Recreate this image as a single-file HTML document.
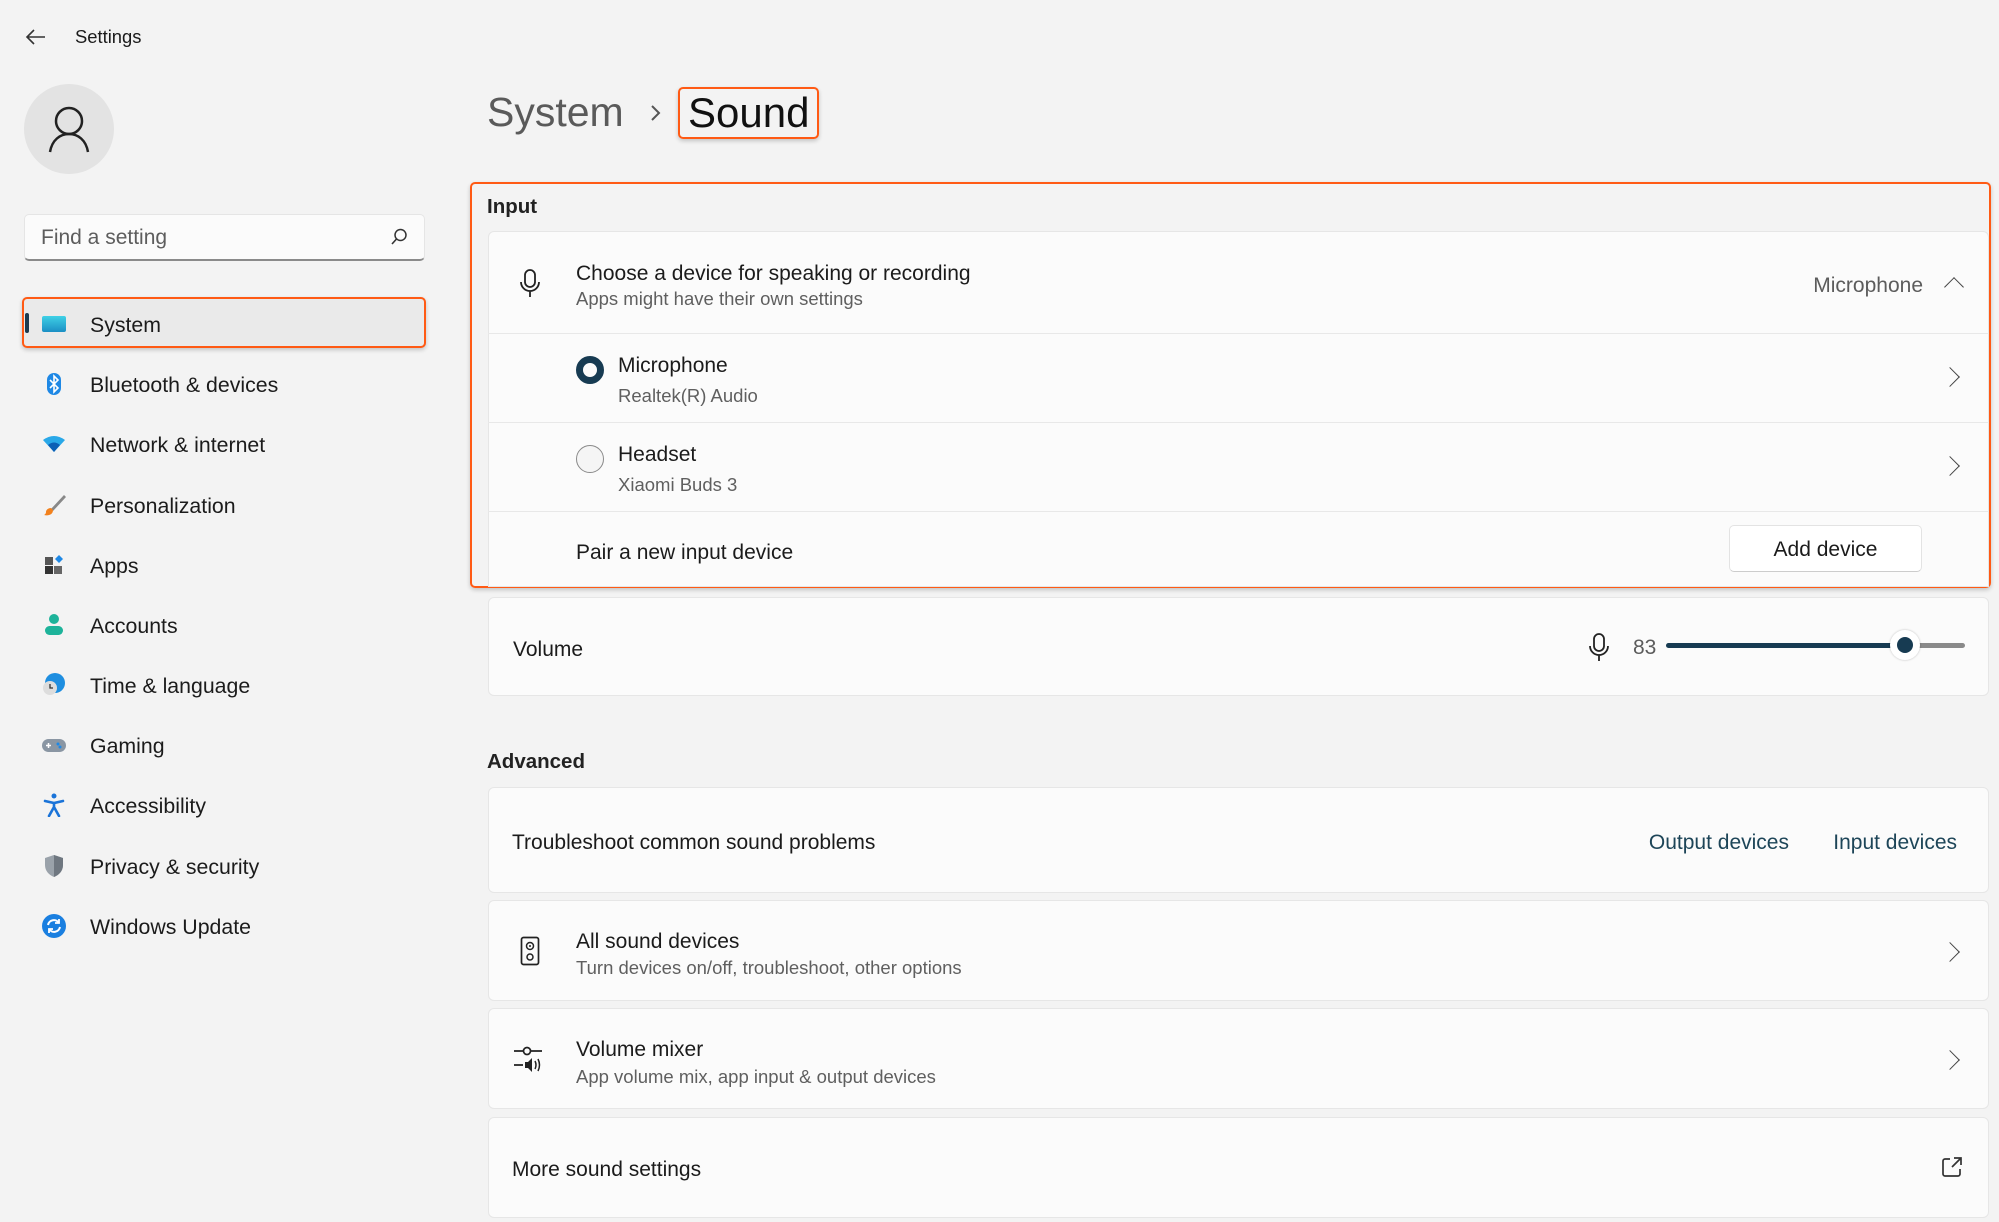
<!DOCTYPE html>
<html><head><meta charset="utf-8"><style>
*{box-sizing:border-box;margin:0;padding:0}
body{width:1999px;height:1222px;background:#f3f3f3;font-family:"Liberation Sans",sans-serif;color:#1b1b1b;position:relative;overflow:hidden}
.a{position:absolute;white-space:nowrap}
.t{font-size:21px}
.s{font-size:18.5px;color:#5f5f5f}
.card{position:absolute;left:488px;width:1501px;background:#fbfbfb;border:1px solid #e6e6e6;border-radius:6px}
.nav{position:absolute;left:90px;font-size:21.3px;color:#1b1b1b;margin-top:1px}
.ic{position:absolute;left:42px;width:24px;height:24px}
.hr{position:absolute;left:488px;width:1501px;height:1px;background:#e8e8e8}
.chev{position:absolute;width:14px;height:14px;border-right:1.6px solid #444;border-top:1.6px solid #444;transform:rotate(45deg)}
.r{position:absolute;white-space:nowrap;text-align:right}
</style></head><body>

<svg class="a" style="left:24px;top:28px" width="24" height="18" viewBox="0 0 24 18"><path d="M10 2 3 9l7 7M3 9h18" stroke="#333" stroke-width="1.6" fill="none"/></svg>
<div class="a" style="left:75px;top:26px;font-size:18.4px">Settings</div>

<div class="a" style="left:24px;top:84px;width:90px;height:90px;border-radius:50%;background:#e3e3e3"></div>
<svg class="a" style="left:47px;top:105px" width="44" height="48" viewBox="0 0 44 48"><circle cx="22" cy="16" r="13" stroke="#222" stroke-width="2.5" fill="none"/><path d="M3 47c2-12 10-18 19-18s17 6 19 18" stroke="#222" stroke-width="2.5" fill="none"/></svg>

<div class="a" style="left:24px;top:214px;width:401px;height:47px;background:#fbfbfb;border:1px solid #e5e5e5;border-bottom:2px solid #8a8a8a;border-radius:5px"></div>
<div class="a" style="left:41px;top:226px;font-size:21px;color:#5d5d5d">Find a setting</div>
<svg class="a" style="left:389px;top:227px" width="20" height="20" viewBox="0 0 20 20"><circle cx="11.5" cy="8" r="5.5" stroke="#333" stroke-width="1.5" fill="none"/><path d="M7.5 12 3 17" stroke="#333" stroke-width="1.6"/></svg>

<div class="a" style="left:22px;top:297px;width:404px;height:51px;background:#eaeaea;border:2.5px solid #ff5a14;border-radius:5px;box-shadow:0 2px 4px rgba(0,0,0,.2)"></div>
<div class="a" style="left:25px;top:313px;width:4px;height:20px;background:#1c3a4e;border-radius:2px"></div>
<div class="a" style="left:42px;top:316px;width:24px;height:16px;background:linear-gradient(#3fd1e6,#1b8fc4);border-radius:2px"></div>
<div class="nav" style="top:312px">System</div>

<svg class="ic" style="top:372px" viewBox="0 0 24 24"><rect x="5" y="1" width="14" height="22" rx="7" fill="#1e88e5"/><path d="M8 8l8 8-4 4V4l4 4-8 8" stroke="#fff" stroke-width="1.6" fill="none"/></svg>
<div class="nav" style="top:372px">Bluetooth &amp; devices</div>

<svg class="ic" style="top:432px" viewBox="0 0 24 24"><path d="M1 8q11-8 22 0L12 20z" fill="#29a8e8"/><path d="M6 13q6-5 12 0l-6 7z" fill="#0c5fb5"/></svg>
<div class="nav" style="top:432px">Network &amp; internet</div>

<svg class="ic" style="top:493px" viewBox="0 0 24 24"><path d="M22 2 9 16l2 2L24 4z" fill="#888"/><path d="M9 15c-3 0-5 2-5 4s-2 3-2 3c4 1 9 0 9-5z" fill="#f2811d"/></svg>
<div class="nav" style="top:493px">Personalization</div>

<svg class="ic" style="top:553px" viewBox="0 0 24 24"><rect x="3" y="4" width="8" height="8" fill="#555"/><rect x="3" y="13" width="8" height="8" fill="#333"/><rect x="12" y="13" width="8" height="8" fill="#666"/><path d="M17 2l4 4-4 4-4-4z" fill="#1e88e5"/></svg>
<div class="nav" style="top:553px">Apps</div>

<svg class="ic" style="top:613px" viewBox="0 0 24 24"><circle cx="12" cy="6" r="5" fill="#1db39a"/><rect x="3" y="13" width="18" height="9" rx="4.5" fill="#1db39a"/></svg>
<div class="nav" style="top:613px">Accounts</div>

<svg class="ic" style="top:673px" viewBox="0 0 24 24"><circle cx="13" cy="10" r="10" fill="#1e8ee0"/><circle cx="8" cy="15" r="7" fill="#ddd"/><path d="M8 11v4h3" stroke="#333" stroke-width="1.3" fill="none"/></svg>
<div class="nav" style="top:673px">Time &amp; language</div>

<svg class="ic" style="top:733px" viewBox="0 0 24 24"><rect x="0" y="6" width="24" height="13" rx="6.5" fill="#8a96a3"/><path d="M4 12.5h5M6.5 10v5" stroke="#fff" stroke-width="1.5"/><circle cx="16" cy="11" r="1.5" fill="#1e88e5"/><circle cx="18" cy="14" r="1.5" fill="#1e88e5"/></svg>
<div class="nav" style="top:733px">Gaming</div>

<svg class="ic" style="top:793px" viewBox="0 0 24 24"><circle cx="12" cy="3" r="2.5" fill="#1a73d8"/><path d="M3 8l9 2 9-2M12 10v4l-5 9M12 14l5 9" stroke="#1a73d8" stroke-width="2.6" fill="none" stroke-linecap="round"/></svg>
<div class="nav" style="top:793px">Accessibility</div>

<svg class="ic" style="top:854px" viewBox="0 0 24 24"><path d="M12 1 3 4v7c0 6 4 10 9 12 5-2 9-6 9-12V4z" fill="#9aa2aa"/><path d="M12 1v22c5-2 9-6 9-12V4z" fill="#6f7780"/></svg>
<div class="nav" style="top:854px">Privacy &amp; security</div>

<svg class="ic" style="top:914px" viewBox="0 0 24 24"><circle cx="12" cy="12" r="12" fill="#1a7fe0"/><path d="M6 11a6 6 0 0 1 11-2M18 13a6 6 0 0 1-11 2" stroke="#fff" stroke-width="2" fill="none"/><path d="M17 5v4h-4M7 19v-4h4" stroke="#fff" stroke-width="1.8" fill="none"/></svg>
<div class="nav" style="top:914px">Windows Update</div>

<!-- header -->
<div class="a" style="left:487px;top:89px;font-size:41px;color:#5a5a5a">System</div>
<svg class="a" style="left:649px;top:103px" width="14" height="20" viewBox="0 0 14 20"><path d="M3 3l7 7-7 7" stroke="#555" stroke-width="2" fill="none"/></svg>
<div class="a" style="left:678px;top:87px;width:141px;height:52px;border:2.5px solid #ff5a14;border-radius:5px;box-shadow:0 2px 4px rgba(0,0,0,.2)"></div>
<div class="a" style="left:688px;top:89px;font-size:42px;color:#111">Sound</div>

<!-- Input box -->
<div class="a" style="left:470px;top:182px;width:1521px;height:406px;border:2.5px solid #ff5a14;border-radius:5px;box-shadow:0 2px 4px rgba(0,0,0,.2)"></div>
<div class="a" style="left:487px;top:195px;font-size:20.5px;font-weight:bold;color:#222">Input</div>
<div class="card" style="top:231px;height:356px;border-radius:6px 6px 0 0"></div>
<div class="hr" style="top:333px"></div>
<div class="hr" style="top:422px"></div>
<div class="hr" style="top:511px"></div>

<svg class="a" style="left:518px;top:268px" width="24" height="32" viewBox="0 0 24 32"><rect x="7" y="2" width="10" height="17" rx="5" stroke="#222" stroke-width="1.8" fill="none"/><path d="M3 14a9 9 0 0 0 18 0M12 23v6" stroke="#222" stroke-width="1.8" fill="none"/></svg>
<div class="a t" style="left:576px;top:262px">Choose a device for speaking or recording</div>
<div class="a s" style="left:576px;top:288px">Apps might have their own settings</div>
<div class="r t" style="right:76px;top:274px;color:#5c5c5c">Microphone</div>
<div class="chev" style="left:1947px;top:280px;transform:rotate(-45deg)"></div>

<div class="a" style="left:576px;top:356px;width:28px;height:28px;border-radius:50%;border:7px solid #173b52"></div>
<div class="a t" style="left:618px;top:354px">Microphone</div>
<div class="a s" style="left:618px;top:385px">Realtek(R) Audio</div>
<div class="chev" style="left:1943px;top:370px"></div>

<div class="a" style="left:576px;top:445px;width:28px;height:28px;border-radius:50%;border:1.5px solid #8a8a8a;background:#f5f5f5"></div>
<div class="a t" style="left:618px;top:443px">Headset</div>
<div class="a s" style="left:618px;top:474px">Xiaomi Buds 3</div>
<div class="chev" style="left:1943px;top:459px"></div>

<div class="a t" style="left:576px;top:541px">Pair a new input device</div>
<div class="a" style="left:1729px;top:525px;width:193px;height:47px;background:#fff;border:1px solid #e3e3e3;border-bottom-color:#ccc;border-radius:5px;font-size:21px;text-align:center;line-height:47px">Add device</div>

<!-- Volume -->
<div class="card" style="top:597px;height:99px"></div>
<div class="a t" style="left:513px;top:638px">Volume</div>
<svg class="a" style="left:1587px;top:632px" width="24" height="32" viewBox="0 0 24 32"><rect x="7" y="2" width="10" height="17" rx="5" stroke="#222" stroke-width="1.8" fill="none"/><path d="M3 14a9 9 0 0 0 18 0M12 23v6" stroke="#222" stroke-width="1.8" fill="none"/></svg>
<div class="a" style="left:1633px;top:636px;font-size:21px;color:#5c5c5c">83</div>
<div class="a" style="left:1666px;top:643px;width:240px;height:5px;background:#173b52;border-radius:3px"></div>
<div class="a" style="left:1906px;top:643px;width:59px;height:5px;background:#8a8a8a;border-radius:3px"></div>
<div class="a" style="left:1890px;top:630px;width:30px;height:30px;border-radius:50%;background:#fff;box-shadow:0 0 2px rgba(0,0,0,.25)"></div>
<div class="a" style="left:1897px;top:637px;width:16px;height:16px;border-radius:50%;background:#173b52"></div>

<div class="a" style="left:487px;top:750px;font-size:20.5px;font-weight:bold;color:#222">Advanced</div>

<div class="card" style="top:787px;height:106px"></div>
<div class="a t" style="left:512px;top:831px">Troubleshoot common sound problems</div>
<div class="r t" style="right:210px;top:831px;color:#1d4558">Output devices</div>
<div class="r t" style="right:42px;top:831px;color:#1d4558">Input devices</div>

<div class="card" style="top:900px;height:101px"></div>
<svg class="a" style="left:520px;top:936px" width="20" height="30" viewBox="0 0 20 30"><rect x="1.5" y="1.5" width="17" height="27" rx="2" stroke="#222" stroke-width="1.7" fill="none"/><circle cx="10" cy="10" r="3.5" stroke="#222" stroke-width="1.5" fill="none"/><circle cx="10" cy="10" r="1" fill="#222"/><circle cx="10" cy="21" r="3" stroke="#222" stroke-width="1.5" fill="none"/></svg>
<div class="a t" style="left:576px;top:930px">All sound devices</div>
<div class="a s" style="left:576px;top:957px">Turn devices on/off, troubleshoot, other options</div>
<div class="chev" style="left:1943px;top:945px"></div>

<div class="card" style="top:1008px;height:101px"></div>
<svg class="a" style="left:513px;top:1044px" width="34" height="30" viewBox="0 0 34 30"><path d="M1 7h9M18 7h11M1 21h9" stroke="#222" stroke-width="1.8"/><circle cx="14" cy="7" r="3.5" stroke="#222" stroke-width="1.7" fill="none"/><path d="M12 18h3l4-4v14l-4-4h-3z" fill="#222"/><path d="M22 17q2 4 0 8M25 15q3 6 0 12" stroke="#222" stroke-width="1.5" fill="none"/></svg>
<div class="a t" style="left:576px;top:1038px">Volume mixer</div>
<div class="a s" style="left:576px;top:1066px">App volume mix, app input &amp; output devices</div>
<div class="chev" style="left:1943px;top:1053px"></div>

<div class="card" style="top:1117px;height:101px"></div>
<div class="a t" style="left:512px;top:1158px">More sound settings</div>
<svg class="a" style="left:1941px;top:1156px" width="22" height="22" viewBox="0 0 22 22"><path d="M9 3H4a2 2 0 0 0-2 2v13a2 2 0 0 0 2 2h13a2 2 0 0 0 2-2v-5" stroke="#333" stroke-width="1.7" fill="none"/><path d="M11 11l9-9M13 2h7v7" stroke="#333" stroke-width="1.7" fill="none"/></svg>

</body></html>
